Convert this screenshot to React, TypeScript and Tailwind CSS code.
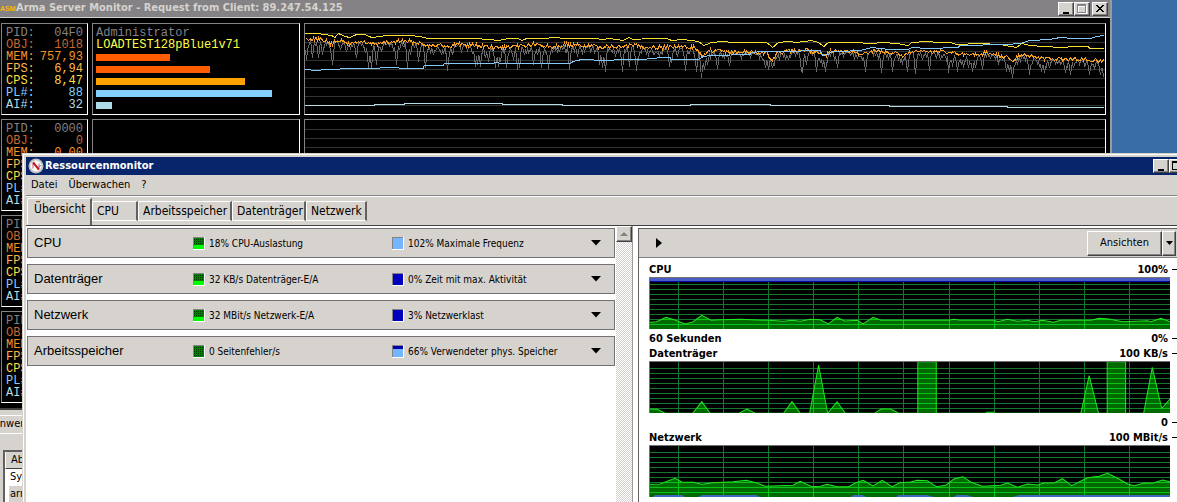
import React from "react";

/* ---------- data ---------- */

type Metric = { label: string; color: string; value: string; idle: string; bar?: number; barColor?: string };

const METRICS: Metric[] = [
  { label: "PID:", color: "text-[#848284]", value: "04F0", idle: "0000" },
  { label: "OBJ:", color: "text-[#c66931]", value: "1018", idle: "0" },
  { label: "MEM:", color: "text-[#f79229]", value: "757,93", idle: "0,00", bar: 74, barColor: "bg-[#ff5d00]" },
  { label: "FPS:", color: "text-[#ffb64a]", value: "6,94", idle: "", bar: 114, barColor: "bg-[#ff5d00]" },
  { label: "CPS:", color: "text-[#ffdf42]", value: "8,47", idle: "", bar: 149, barColor: "bg-[#ffa200]" },
  { label: "PL#:", color: "text-[#84cfff]", value: "88", idle: "", bar: 176, barColor: "bg-[#84cfff]" },
  { label: "AI#:", color: "text-[#b5dbe7]", value: "32", idle: "", bar: 16, barColor: "bg-[#addbe7]" },
];

type Segment = { start: number; pts: number[] };

const YELLOW: Segment[] = [
  { start: -5, pts: [14,100,50,101,75,103,95,105,105,113,115,100,135,110,150,112,170,103,195,104,215,112,240,110,260,106,330,107,360,110,385,114,430,114,520,115,570,118,595,121,625,116,655,116,665,121,680,115,720,114,735,116,760,113,800,116] },
  { start: 265, pts: [0,116,80,116,95,119,120,116,160,120,178,112,190,117,240,115,290,116,305,121,340,118,385,123,402,135,425,126,460,123,485,128,590,127,608,142,625,128,655,124,680,128,725,122,745,126,762,139,775,126,800,126] },
  { start: 535, pts: [0,127,50,126,90,131,130,126,170,131,205,135,215,128,260,125,300,127,330,128,350,132,420,130,480,133,530,141,545,131,570,137,610,139,670,141,700,139,745,140,750,144,792,145] },
];

const ORANGE: Segment[] = [
  { start: -5, pts: [14,115,40,115,75,120,95,133,110,118,145,130,180,122,205,130,260,127,300,122,350,125,375,133,420,135,440,140,470,130,530,135,580,142,640,140,700,132,745,138,800,132] },
  { start: 265, pts: [0,135,105,138,160,140,185,133,240,140,370,140,385,158,400,165,420,150,470,155,520,153,590,158,605,180,620,158,690,148,745,155,762,165,780,152,800,153] },
  { start: 535, pts: [0,153,45,155,60,165,95,150,160,157,185,165,215,155,290,152,350,160,400,165,440,157,490,168,518,178,545,160,590,172,650,177,720,175,760,180,792,182] },
];

const BLUE: Segment[] = [
  { start: -5, pts: [14,208,50,210,75,208,165,206,225,206,255,202,340,204,370,204,373,197,430,197,433,190,580,190,583,187,610,190,800,190] },
  { start: 265, pts: [0,190,10,184,35,179,110,181,155,177,215,178,275,173,300,173,303,178,385,178,400,170,425,166,540,163,545,158,580,155,640,154,750,152,758,165,775,162,785,154,800,154] },
  { start: 535, pts: [0,153,60,150,95,143,150,147,205,147,215,143,265,145,355,141,360,136,500,134,540,129,570,122,630,117,660,112,700,115,750,114,770,108,792,106] },
];

const PALE: Segment[] = [
  { start: -5, pts: [14,316,224,316,225,313,312,313,313,310,608,310,609,313,788,313,789,316] },
  { start: 265, pts: [0,316,362,316,363,313,600,313,601,316] },
  { start: 535, pts: [0,316,147,316,148,319,503,319,504,322,792,322] },
];

const DIPS: Segment[] = [
  { start: -5, pts: [18,180,37,175,55,175,65,165,97,195,120,150,137,155,168,175,195,160,205,205,212,205,228,195,243,155,288,195,297,150,322,205,330,165,355,185,375,205,400,165,423,165,441,213,455,165,482,155,524,200,532,195,540,200,555,175,565,185,584,205,594,200,600,185,617,205,640,180,652,210,657,205,672,165,700,195,712,165,724,205,745,208,770,155,806,210] },
  { start: 265, pts: [20,170,88,195,95,205,106,215,135,170,157,215,178,200,197,213,203,180,235,165,268,170,298,200,304,190,320,170,345,213,378,215,392,235,402,210,410,195,425,165,442,207,455,170,476,198,520,165,585,205,595,210,605,205,655,180,692,215,697,217,708,195,738,215,750,190,757,200,764,215,802,205] },
  { start: 535, pts: [50,175,76,215,124,220,145,175,157,215,185,190,200,215,224,222,245,180,267,212,300,180,318,180,325,220,335,200,350,215,362,195,368,205,384,205,395,217,405,205,427,210,450,175,475,190,487,180,497,215,506,215,516,235,530,190,548,175,567,225,590,190,602,215,612,220,628,205,650,190,675,220,690,225,700,205,725,185,747,225,762,205,780,225,790,230] },
];

type Pt = [number, number];

function flatten(segments: Segment[]): Pt[] {
  const out: Pt[] = [];
  for (const s of segments) {
    for (let i = 0; i < s.pts.length; i += 2) out.push([s.start + s.pts[i] / 3, s.pts[i + 1] / 3 - 24]);
  }
  return out;
}

const toPath = (pts: Pt[]) => pts.map(([x, y], i) => `${i ? "L" : "M"}${x.toFixed(1)} ${y.toFixed(1)}`).join("");
const snap = (pts: Pt[]): Pt[] => pts.map(([x, y]) => [x, Math.floor(y) + 0.5]);

function sample(pts: Pt[], x: number) {
  for (let i = 1; i < pts.length; i++) {
    if (x <= pts[i][0]) {
      const [x0, y0] = pts[i - 1];
      const [x1, y1] = pts[i];
      return y0 + ((y1 - y0) * (x - x0)) / (x1 - x0 || 1);
    }
  }
  return pts[pts.length - 1][1];
}

function noise(seed: number) {
  let s = seed;
  return () => {
    s = (s * 1103515245 + 12345) % 2147483648;
    return s / 2147483648;
  };
}

function jitteredOrange(): Pt[] {
  const base = flatten(ORANGE);
  const rnd = noise(7);
  const out: Pt[] = [];
  for (let x = 0; x < 799; x += 1) out.push([x + 0.5, Math.round(sample(base, x) + (rnd() - 0.5) * 4) + 0.5]);
  return out;
}

function grayTrace(): Pt[] {
  const base = flatten(ORANGE);
  const dips = flatten(DIPS);
  const rnd = noise(31);
  const out: Pt[] = [];
  for (let x = 0; x < 799; x += 1) {
    const dip = dips.find(([dx]) => Math.abs(dx - x) <= 0.5);
    const near = dips.find(([dx]) => Math.abs(dx - x) <= 1.5);
    const b = sample(base, x) + 1;
    const y = dip ? dip[1] : near ? b + (near[1] - b) * 0.5 : b + Math.pow(rnd(), 2) * 8;
    out.push([x + 0.5, y]);
  }
  return out;
}

type Graph = { title: string; max: string; foot: string; zero: string; left: number[]; right: number[]; top: number };

const GRAPHS: Graph[] = [
  {
    title: "CPU", max: "100%", foot: "60 Sekunden", zero: "0%", top: 159,
    left: [30,292,50,290,78,277,105,285,135,297,158,291,185,271,213,286,240,284,300,283,350,285,385,286,430,289,455,286,480,289,510,283,540,284,564,297,590,277,613,288,650,286,668,297,698,277,722,286,780,286],
    right: [0,286,145,286,160,283,180,286,280,286,292,290,320,283,350,289,380,286,400,290,425,286,458,292,480,286,570,286,595,280,625,282,665,290,740,287,750,290,780,280,807,290],
  },
  {
    title: "Datenträger", max: "100 KB/s", foot: "", zero: "0", top: 51,
    left: [30,192,52,193,75,205,158,205,185,170,210,205,297,205,320,192,345,205,430,205,455,170,480,205,508,205,535,60,562,205,590,170,615,205,702,205,722,192,750,192,775,205],
    right: [52,205,52,50,107,50,107,205,255,205,258,202,280,202,280,205,540,205,565,92,593,205,619,205,619,50,674,50,674,205,728,205,754,67,782,190,807,162],
  },
  {
    title: "Netzwerk", max: "100 MBit/s", foot: "", zero: "", top: 303,
    left: [30,418,60,417,105,400,125,411,160,412,185,418,220,413,280,410,318,406,350,414,375,424,458,421,480,409,515,425,540,424,560,418,590,425,625,425,645,414,668,406,698,423,725,406,755,425,780,412],
    right: [0,413,30,411,50,406,80,407,108,425,135,421,160,402,187,395,210,411,245,424,300,421,320,414,350,427,380,417,410,420,430,414,460,414,485,401,512,422,560,398,595,394,620,385,650,400,680,417,700,422,730,414,755,415,785,405,807,410],
  },
];

const SECTIONS = [
  { name: "CPU", a: "18% CPU-Auslastung", aIcon: "load", b: "102% Maximale Frequenz", bIcon: "sky" },
  { name: "Datenträger", a: "32 KB/s Datenträger-E/A", aIcon: "load", b: "0% Zeit mit max. Aktivität", bIcon: "navy" },
  { name: "Netzwerk", a: "32 MBit/s Netzwerk-E/A", aIcon: "load", b: "3% Netzwerklast", bIcon: "navy" },
  { name: "Arbeitsspeicher", a: "0 Seitenfehler/s", aIcon: "idle", b: "66% Verwendeter phys. Speicher", bIcon: "mixed" },
];

/* ---------- shared pieces ---------- */

const RAISED = "bg-[#d6d3ce] border border-t-white border-l-white border-r-[#424142] border-b-[#424142] shadow-[inset_-1px_-1px_0_#848284]";

function CaptionButton({ kind, label, dim }: { kind: "min" | "max" | "close"; label: string; dim?: boolean }) {
  return (
    <button type="button" aria-label={label} className={`${RAISED} flex h-[14px] w-4 shrink-0 items-center justify-center`}>
      <svg width="12" height="10" viewBox="0 0 12 10" shapeRendering="crispEdges" fill="none" aria-hidden="true">
        {kind === "min" && <path d="M3 8h6v2H3z" fill="#000" />}
        {kind === "max" && (
          <>
            {dim && <path d="M2.5 1.5h8v8h-8zM2 2.5h9" stroke="#fff" />}
            <path d="M1.5 .5h8v8h-8zM1 1.5h9" stroke={dim ? "#848284" : "#000"} />
          </>
        )}
        {kind === "close" && (
          <path
            d="M2 1h2v1H2zM8 1h2v1H8zM3 2h2v1H3zM7 2h2v1H7zM4 3h4v1H4zM5 4h2v1H5zM4 5h4v1H4zM3 6h2v1H3zM7 6h2v1H7zM2 7h2v1H2zM8 7h2v1H8z"
            fill="#000"
          />
        )}
      </svg>
    </button>
  );
}

function GridLines({ color }: { color: string }) {
  return (
    <g stroke={color}>
      {[9, 18, 27, 36, 45, 54, 63, 72, 81].map((y) => (
        <line key={y} x1="0" x2="800" y1={y + 0.5} y2={y + 0.5} />
      ))}
    </g>
  );
}

const BEVEL = "border border-t-[#848284] border-l-[#848284] border-r-white border-b-white";

function ServerRow({ live, showIdle }: { live: boolean; showIdle: boolean }) {
  return (
    <section className="flex h-[92px] shrink-0 gap-1">
      <dl className={`${BEVEL} w-[87px] shrink-0 py-[3px] pr-1 pl-1`}>
        {METRICS.map((m) => (
          <div key={m.label} className={`flex h-3 justify-between ${m.color}`}>
            <dt>{m.label}</dt>
            <dd>{live ? m.value : showIdle ? m.idle : ""}</dd>
          </div>
        ))}
      </dl>
      <div className={`${BEVEL} w-[208px] shrink-0 px-[3px] py-[3px]`}>
        {live && (
          <>
            <p className="h-3 text-[#848284]">Administrator</p>
            <p className="h-3 text-[#ffff42]">LOADTEST128pBlue1v71</p>
            {METRICS.filter((m) => m.bar).map((m) => (
              <div key={m.label} className="flex h-3 items-center">
                <div className={`h-[7px] ${m.barColor}`} style={{ width: m.bar }} />
              </div>
            ))}
          </>
        )}
      </div>
      <div className={`${BEVEL} min-w-0 flex-1`}>
        <svg
          className="block h-full w-full"
          viewBox="0 0 800 90"
          preserveAspectRatio="none"
          fill="none"
          shapeRendering="crispEdges"
          role="img"
          aria-label="Verlauf"
        >
          <GridLines color="#31342f" />
          {live && (
            <>
              <path d={toPath(grayTrace())} stroke="#6b696b" />
              <path d={toPath(jitteredOrange())} stroke="#f7a221" />
              <path d={toPath(snap(flatten(YELLOW)))} stroke="#f7df31" />
              <path d={toPath(snap(flatten(BLUE)))} stroke="#84c7f7" />
              <path d={toPath(snap(flatten(PALE)))} stroke="#b5dbe7" />
            </>
          )}
        </svg>
      </div>
    </section>
  );
}

function ServerMonitor() {
  return (
    <div className="absolute top-0 right-[65px] left-0 flex flex-col border-r-2 border-b-2 border-r-[#9c9a9c] border-b-[#424142] bg-black">
      <header className="flex h-[18px] items-center border-b border-[#d6d3ce] bg-[#848284] pr-[2px]">
        <span className="w-4 shrink-0 font-['Liberation_Sans'] text-[7px] leading-3 font-bold text-[#ffb600]">ASM</span>
        <h1 className="flex-1 truncate text-[11px] font-bold text-[#d6d3ce]">
          Arma Server Monitor - Request from Client: 89.247.54.125
        </h1>
        <CaptionButton kind="min" label="Minimieren" />
        <CaptionButton kind="max" label="Maximieren" dim />
        <span className="w-[2px]" />
        <CaptionButton kind="close" label="Schließen" />
      </header>
      <div className="flex flex-col gap-1 py-[5px] pr-1 pl-px font-['Liberation_Mono',monospace] text-xs leading-3">
        {[0, 1, 2, 3].map((i) => (
          <ServerRow key={i} live={i === 0} showIdle={i === 1} />
        ))}
      </div>
    </div>
  );
}

function TaskManager() {
  return (
    <div className="absolute top-[409px] -left-3 w-[400px] bg-[#d6d3ce] pt-[6px] text-[11px]">
      <div className="flex h-[19px] items-center border-y border-white pl-[5px]">Anwendungen</div>
      <div className="mt-4 ml-[15px] border-2 border-[#63615f] bg-white">
        <div className="flex h-[17px] items-center border-b border-l border-b-[#424142] border-l-white bg-[#d6d3ce] pl-[5px]">Abbildname</div>
        <div className="flex h-[17px] items-center pl-[5px]">System</div>
        <div className="ml-1 flex h-[17px] items-center bg-[#d6d3ce] pl-px">arma2oaserver.exe</div>
      </div>
    </div>
  );
}

/* ---------- resource monitor ---------- */

function MonitorLogo() {
  return (
    <svg width="16" height="16" viewBox="0 0 16 16" aria-hidden="true">
      <circle cx="8" cy="8" r="7.5" fill="#bdbebd" />
      <circle cx="8" cy="8" r="5.5" fill="#fff" stroke="#dedfde" />
      <path d="M5 10.500V5l1.500-.8M11 5.500v5l-1.500 1" fill="none" stroke="#b5656b" />
      <path d="M5 4.500l6 7" stroke="#c61821" strokeWidth="2" />
      <path d="M11.500 9l1-2" stroke="#4a69a5" />
    </svg>
  );
}

function Swatch({ kind }: { kind: string }) {
  return (
    <svg className="shrink-0" width="12" height="13" viewBox="0 0 12 13" shapeRendering="crispEdges" aria-hidden="true">
      <path d="M0 0h12v13H0z" fill="#fff" />
      <path d="M0 0h11v12H0z" fill="#848284" />
      {(kind === "load" || kind === "idle") && (
        <>
          <path d="M1 1h10v11H1z" fill="#008200" />
          <path d="M1 2.5h10M1 4.500h10M1 6.500h10M1 8.500h10M1 10.500h10" stroke="#003c00" strokeDasharray="1 1" />
          {kind === "load" && <path d="M1 8h10v4H1z" fill="#00ff00" />}
        </>
      )}
      {kind === "sky" && <path d="M1 1h10v11H1z" fill="#73b6ff" />}
      {kind === "navy" && <path d="M1 1h10v11H1z" fill="#0000bd" />}
      {kind === "mixed" && (
        <>
          <path d="M1 1h10v11H1z" fill="#73b6ff" />
          <path d="M1 1h10v3H1z" fill="#0000ad" />
        </>
      )}
    </svg>
  );
}

function Tab({ label, active, width }: { label: string; active?: boolean; width: string }) {
  return (
    <button
      type="button"
      role="tab"
      aria-selected={!!active}
      className={`${width} shrink-0 rounded-tl-[2px] border-t border-l border-white border-r-2 border-r-[#63615f] text-left ${
        active ? "h-[27px] pb-[6px] pl-[6px]" : "mt-[3px] h-5 border-b pl-1"
      }`}
    >
      {label}
    </button>
  );
}

function graphPoints(g: Graph): Pt[] {
  const out: Pt[] = [];
  for (let i = 0; i < g.left.length; i += 2) out.push([g.left[i] / 3 - 10, (g.left[i + 1] - g.top) / 3]);
  for (let i = 0; i < g.right.length; i += 2) out.push([250 + g.right[i] / 3, (g.right[i + 1] - g.top) / 3]);
  return out;
}

const H_LINES = [6, 11, 16, 21, 26, 31, 36, 41, 46];
const V_LINES = [28, 73, 118, 163, 208, 253, 298, 343, 388, 433, 478];

function GreenGraph({ graph }: { graph: Graph }) {
  const line = toPath(graphPoints(graph));
  const area = `${line}L519 52L0 52Z`;
  const clip = `area-${graph.title}`;
  const grid = H_LINES.map((y) => `M0 ${y}.5H519`).join("") + V_LINES.map((x) => `M${x}.5 0V51`).join("");
  return (
    <div className="h-[52px] border-t border-l border-[#737173] bg-black">
      <svg className="block h-full w-full" viewBox="0 0 519 51" preserveAspectRatio="none" fill="none" role="img" aria-label={graph.title}>
        <defs>
          <clipPath id={clip}>
            <path d={area} />
          </clipPath>
        </defs>
        <path d={grid} stroke="#147832" shapeRendering="crispEdges" />
        <path d={area} fill="#006900" />
        <path d={grid} stroke="#08c318" shapeRendering="crispEdges" clipPath={`url(#${clip})`} />
        <path d={line} stroke="#21e321" />
        {graph.title === "CPU" && (
          <g shapeRendering="crispEdges">
            <path d="M0 0h519v3H0z" fill="#4a5dc6" />
            <path d="M0 3h519v1H0z" fill="#0808a5" />
          </g>
        )}
        {graph.title === "Netzwerk" && (
          <path d="M5 49h27l3 2H3zM52 49h54l4 2H48zM203 49h9l4 2h-16zM248 49h28l8 2h-38zM306 49h10l7 2h-20zM368 49h151v2H362z" fill="#3f69bd" />
        )}
      </svg>
    </div>
  );
}

function ResourceMonitor() {
  return (
    <div className="absolute top-[153px] -right-[30px] bottom-0 left-[22px] flex flex-col border-t border-l border-[#d6d3ce] bg-[#d6d3ce] text-[11px]">
      <div className="flex min-h-0 flex-1 flex-col border-t border-l border-white pt-[2px] pl-[2px]">
        <header className="flex h-[18px] shrink-0 items-center bg-[#08246b] pr-1 pl-[2px]">
          <MonitorLogo />
          <h2 className="flex-1 pl-px font-bold text-white">Ressourcenmonitor</h2>
          <CaptionButton kind="min" label="Minimieren" />
          <CaptionButton kind="max" label="Maximieren" />
          <span className="w-[2px]" />
          <CaptionButton kind="close" label="Schließen" />
        </header>
        <nav className="flex h-[21px] shrink-0 items-center gap-[11px] border-b border-[#848284] pt-px pl-[5px]">
          <button type="button">Datei</button>
          <button type="button">Überwachen</button>
          <button type="button">?</button>
        </nav>
        <div role="tablist" className="flex h-[30px] shrink-0 items-start border-t border-b border-t-white border-b-[#424142] pt-px pl-px text-xs">
          <Tab label="Übersicht" active width="w-[65px]" />
          <Tab label="CPU" width="w-[46px]" />
          <Tab label="Arbeitsspeicher" width="w-[94px]" />
          <Tab label="Datenträger" width="w-[74px]" />
          <Tab label="Netzwerk" width="w-[61px]" />
        </div>
        <div className="flex min-h-0 flex-1 bg-white">
          <main className="flex w-[590px] shrink-0 flex-col gap-[6px] px-px pt-[2px]">
            {SECTIONS.map((s) => (
              <section key={s.name} className="flex h-[30px] shrink-0 items-center border border-[#737173] bg-[#d6d3ce] pr-3 pl-[6px] text-[10px]">
                <h3 className="w-[159px] shrink-0 font-['Liberation_Sans',sans-serif] text-[13px]">{s.name}</h3>
                <div className="flex w-[199px] shrink-0 items-center gap-1">
                  <Swatch kind={s.aIcon} />
                  <span>{s.a}</span>
                </div>
                <div className="flex flex-1 items-center gap-1 whitespace-nowrap">
                  <Swatch kind={s.bIcon} />
                  <span>{s.b}</span>
                </div>
                <button type="button" aria-label={`${s.name} erweitern`} className="p-px">
                  <svg width="10" height="6" viewBox="0 0 10 6" aria-hidden="true">
                    <path d="M0 0h10L5 5.500z" />
                  </svg>
                </button>
              </section>
            ))}
          </main>
          <div className="w-[17px] shrink-0 border-r border-[#9c9a9c] bg-[repeating-conic-gradient(#d6d3ce_0_25%,#ffffff_0_50%)] bg-[length:2px_2px]">
            <button type="button" aria-label="Nach oben" className={`${RAISED} flex h-4 w-4 items-center justify-center`}>
              <svg width="8" height="4" viewBox="0 0 8 4" aria-hidden="true">
                <path d="M0 4h8L4 0z" fill="#848284" />
              </svg>
            </button>
          </div>
          <aside className="mt-[2px] ml-[5px] min-w-0 flex-1 border-t border-l border-[#63615f]">
            <div className="flex h-[29px] items-center justify-between border-b border-[#848284] bg-[#d6d3ce] pr-[31px] pl-[17px]">
              <button type="button" aria-label="Diagramme ausblenden">
                <svg width="6" height="10" viewBox="0 0 6 10" aria-hidden="true">
                  <path d="M0 0l6 5-6 5z" />
                </svg>
              </button>
              <div className="flex h-[25px]">
                <button type="button" className={`${RAISED} w-[75px]`}>Ansichten</button>
                <button type="button" aria-label="Ansicht wählen" className={`${RAISED} flex w-[14px] items-center justify-center`}>
                  <svg width="7" height="4" viewBox="0 0 7 4" aria-hidden="true">
                    <path d="M0 0h7L3.500 4z" />
                  </svg>
                </button>
              </div>
            </div>
            <div className="pt-1 pr-[37px] pl-[10px] leading-[15px] font-bold">
              {GRAPHS.map((g) => (
                <figure key={g.title}>
                  <figcaption className="flex justify-between">
                    <span>{g.title}</span>
                    <AxisLabel text={g.max} />
                  </figcaption>
                  <GreenGraph graph={g} />
                  {g.zero && (
                    <div className="flex justify-between pt-[2px]">
                      <span>{g.foot}</span>
                      <AxisLabel text={g.zero} />
                    </div>
                  )}
                </figure>
              ))}
            </div>
          </aside>
        </div>
      </div>
    </div>
  );
}

function AxisLabel({ text }: { text: string }) {
  return (
    <span className="-mr-4 flex items-center gap-1">
      {text}
      <span className="h-px w-[14px] bg-black" />
    </span>
  );
}

export default function App() {
  return (
    <div className="relative h-screen overflow-hidden bg-[#396da5] font-['DejaVu_Sans_Condensed','DejaVu_Sans',sans-serif] text-black">
      <TaskManager />
      <ServerMonitor />
      <ResourceMonitor />
    </div>
  );
}
